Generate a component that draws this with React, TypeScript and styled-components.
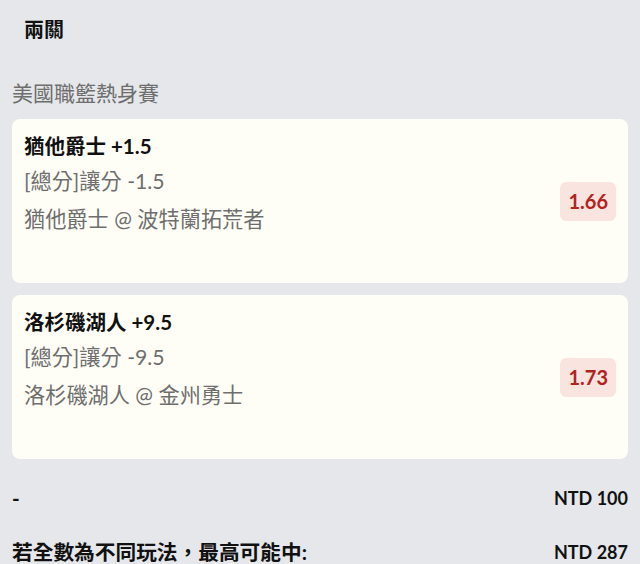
import React from "react";
import styled, { createGlobalStyle } from "styled-components";

const GlobalStyle = createGlobalStyle`
  html, body {
    margin: 0;
    padding: 0;
    background: #e5e7ea;
  }
  body {
    font-family: Lato, "Noto Sans CJK TC", sans-serif;
    color: #111111;
  }
`;

const Page = styled.div`
  display: flex;
  flex-direction: column;
  padding: 0 12px;
  min-height: 564px;
  box-sizing: border-box;
  background: #e5e7ea;
`;

const Header = styled.div`
  height: 56px;
  display: flex;
  align-items: center;
  padding-left: 12px;
  font-size: 20px;
  font-weight: 700;
`;

const SectionTitle = styled.div`
  padding: 23px 0 12px;
  font-size: 21px;
  line-height: 28px;
  color: #6e6e6e;
`;

const CardList = styled.div`
  display: flex;
  flex-direction: column;
  gap: 12px;
`;

const Card = styled.div`
  display: flex;
  align-items: center;
  justify-content: space-between;
  min-height: 164px;
  box-sizing: border-box;
  padding: 12px;
  background: #fffef6;
  border-radius: 8px;
`;

const CardBody = styled.div`
  align-self: flex-start;
  display: flex;
  flex-direction: column;
`;

const BetTitle = styled.div`
  font-size: 20.5px;
  line-height: 30px;
  font-weight: 700;
  color: #111111;
`;

const BetLine = styled.div<{ $gap: number }>`
  margin-top: ${(p) => p.$gap}px;
  font-size: 21.2px;
  line-height: 30px;
  color: #6e6e6e;
`;

const Odds = styled.div`
  height: 39px;
  line-height: 39px;
  padding: 0 8px;
  border-radius: 6px;
  background: #f9e4df;
  color: #b3231d;
  font-size: 20px;
  font-weight: 700;
`;

const Footer = styled.div`
  display: flex;
  flex-direction: column;
  gap: 26px;
  margin-top: 25px;
`;

const FooterRow = styled.div`
  display: flex;
  justify-content: space-between;
  align-items: center;
  line-height: 28px;
  font-weight: 700;
`;

const FooterLabel = styled.span`
  font-size: 20.7px;
`;

const FooterAmount = styled.span`
  font-size: 18px;
`;

type Bet = {
  title: string;
  market: string;
  match: string;
  odds: string;
};

const bets: Bet[] = [
  {
    title: "猶他爵士 +1.5",
    market: "[總分]讓分 -1.5",
    match: "猶他爵士 @ 波特蘭拓荒者",
    odds: "1.66",
  },
  {
    title: "洛杉磯湖人 +9.5",
    market: "[總分]讓分 -9.5",
    match: "洛杉磯湖人 @ 金州勇士",
    odds: "1.73",
  },
];

export default function App() {
  return (
    <>
      <GlobalStyle />
      <Page>
        <Header>兩關</Header>
        <SectionTitle>美國職籃熱身賽</SectionTitle>
        <CardList>
          {bets.map((b) => (
            <Card key={b.title}>
              <CardBody>
                <BetTitle>{b.title}</BetTitle>
                <BetLine $gap={5}>{b.market}</BetLine>
                <BetLine $gap={8}>{b.match}</BetLine>
              </CardBody>
              <Odds>{b.odds}</Odds>
            </Card>
          ))}
        </CardList>
        <Footer>
          <FooterRow>
            <FooterLabel>-</FooterLabel>
            <FooterAmount>NTD 100</FooterAmount>
          </FooterRow>
          <FooterRow>
            <FooterLabel>若全數為不同玩法，最高可能中:</FooterLabel>
            <FooterAmount>NTD 287</FooterAmount>
          </FooterRow>
        </Footer>
      </Page>
    </>
  );
}
